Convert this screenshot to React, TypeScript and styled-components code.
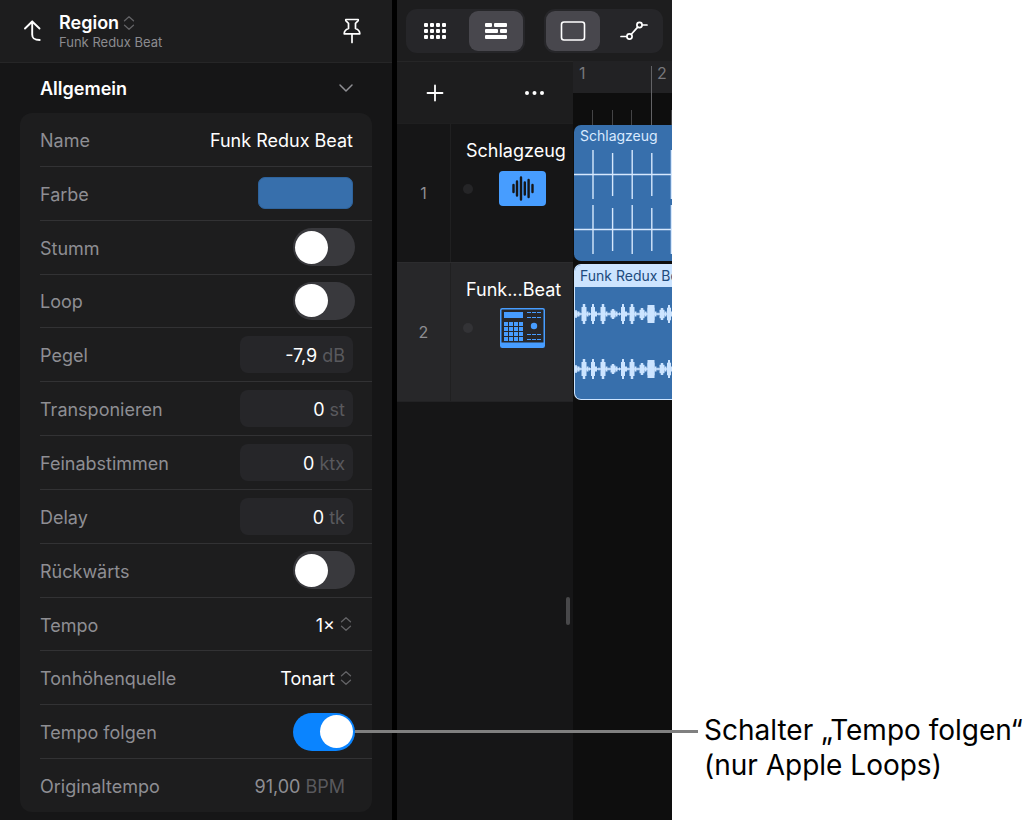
import React from 'react';
import styled, { createGlobalStyle, css } from 'styled-components';

const GlobalStyle = createGlobalStyle`
  * { box-sizing: border-box; }
  html, body { margin: 0; }
  body {
    background: #fff;
    font-family: Inter, "Liberation Sans", sans-serif;
    -webkit-font-smoothing: antialiased;
  }
  button, input, select { font: inherit; color: inherit; margin: 0; }
  h1, h2, p { margin: 0; }
`;

const Page = styled.main`
  position: relative;
  display: grid;
  grid-template-columns: minmax(672px, 1fr) 355px;
  min-height: 100vh;
  padding-bottom: 2px;
`;

const AppWindow = styled.div`
  display: grid;
  grid-template-columns: 392px minmax(275px, 1fr);
  column-gap: 5px;
  background: #000;
  color: #fff;
`;

/* Inspector */

const Inspector = styled.section`
  display: flex;
  flex-direction: column;
  background: #161617;
  padding-bottom: 8px;
`;

const InspectorHeader = styled.header`
  display: flex;
  align-items: center;
  height: 63px;
  padding: 0 28px 0 20px;
  background: #1d1d1e;
  border-bottom: 1px solid #262627;
`;

const PlainButton = styled.button`
  display: inline-flex;
  align-items: center;
  justify-content: center;
  padding: 0;
  border: 0;
  background: none;
  color: #fff;
`;

const HeaderButton = styled(PlainButton)`
  width: 24px;
  height: 32px;
`;

const Heading = styled.div`
  flex: 1;
  padding-left: 15px;
`;

const TitleButton = styled(PlainButton)`
  gap: 4px;
  font-size: 18px;
  font-weight: 600;
  line-height: 22px;
`;

const Subtitle = styled.p`
  color: #8b8b8f;
  font-size: 13px;
  line-height: 16px;
`;

const SectionButton = styled.button`
  display: flex;
  align-items: center;
  justify-content: space-between;
  height: 50px;
  padding: 0 38px 0 40px;
  border: 0;
  background: none;
  font-size: 18px;
  font-weight: 600;
`;

const Card = styled.div`
  flex: 1;
  display: flex;
  flex-direction: column;
  margin: 0 20px;
  padding-left: 20px;
  border-radius: 12px;
  background: #1d1d1e;
`;

const Row = styled.div`
  flex: 1 1 0;
  min-height: 44px;
  display: flex;
  align-items: center;
  justify-content: space-between;
  padding-right: 17px;
  font-size: 18px;
  & + & { border-top: 1px solid #323234; }
`;

const Label = styled.label`
  padding-top: 2px;
  color: #8e8e93;
`;

const NameInput = styled.input`
  width: 180px;
  padding: 2px 0 0;
  border: 0;
  background: none;
  text-align: right;
  margin-right: 2px;
  outline: 0;
`;

const Swatch = styled.button`
  width: 95px;
  height: 32px;
  margin-right: 2px;
  border: 1px solid #2e639c;
  border-radius: 7px;
  background: #376fac;
`;

const Switch = styled.input`
  appearance: none;
  display: flex;
  align-items: center;
  width: 62px;
  height: 38px;
  padding: 0 2px;
  border-radius: 19px;
  background: #39393d;
  &::before {
    content: "";
    width: 33px;
    height: 33px;
    border-radius: 50%;
    background: #fff;
  }
  &:checked { background: #0a84ff; justify-content: flex-end; }
`;

const Field = styled.span`
  display: flex;
  align-items: center;
  gap: 5px;
  width: 113px;
  height: 37px;
  margin-right: 2px;
  padding: 2px 8px 0;
  border-radius: 8px;
  background: #262629;
  color: #59595d;
`;

const FieldInput = styled.input`
  flex: 1;
  min-width: 0;
  padding: 0;
  border: 0;
  background: none;
  color: #fff;
  text-align: right;
  outline: 0;
`;

const Picker = styled.span`
  display: flex;
  align-items: center;
  gap: 5px;
  margin-right: 3px;
`;

const PickerSelect = styled.select`
  appearance: none;
  padding: 2px 0 0;
  border: 0;
  background: none;
  color: #fff;
  text-align: right;
  outline: 0;
`;

const Reading = styled.output`
  display: flex;
  gap: 5px;
  margin-right: 10px;
  padding-top: 2px;
  color: #8e8e93;
`;

const Unit = styled.span`
  color: #59595d;
`;

/* Tracks area */

const Workspace = styled.section`
  display: grid;
  grid-template-rows: 61px 1fr;
  min-width: 0;
  background: #161617;
`;

const Toolbar = styled.div`
  display: flex;
  align-items: center;
  justify-content: space-between;
  padding: 0 9px;
  background: #1d1d1e;
`;

const Segments = styled.div`
  display: flex;
  gap: 7px;
  padding: 2px;
  border-radius: 11px;
  background: #262629;
`;

const Segment = styled.button<{ $on?: boolean }>`
  display: flex;
  align-items: center;
  justify-content: center;
  width: 54px;
  height: 40px;
  padding: 0;
  border: 0;
  border-radius: 9px;
  background: ${(p) => (p.$on ? '#48474d' : 'transparent')};
`;

const Arrange = styled.div`
  display: grid;
  grid-template-columns: 176px minmax(0, 1fr);
`;

const TrackList = styled.div`
  display: flex;
  flex-direction: column;
  border-top: 1px solid #262627;
`;

const TrackTools = styled.div`
  display: flex;
  align-items: center;
  justify-content: space-between;
  height: 61px;
  padding: 0 26px;
  background: #1d1d1e;
`;

const Track = styled.div<{ $selected?: boolean }>`
  display: grid;
  grid-template-columns: 54px 1fr;
  height: 139px;
  background: ${(p) => (p.$selected ? '#272729' : '#161617')};
  border-top: 1px solid ${(p) => (p.$selected ? '#2c2c2e' : '#1f1f20')};
`;

const TrackNumber = styled.div`
  display: flex;
  align-items: center;
  justify-content: center;
  border-right: 1px solid #202021;
  color: #8e8e93;
  font-size: 16px;
`;

const TrackBody = styled.div`
  display: grid;
  grid-template-columns: 38px 1fr;
  grid-template-rows: 24px 41px;
  row-gap: 6px;
  padding: 14px 0 0 10px;
  align-items: center;
`;

const TrackName = styled.h2`
  grid-column: 1 / -1;
  padding-left: 5px;
  font-size: 18px;
  font-weight: 400;
  white-space: nowrap;
`;

const Dot = styled.span<{ $selected?: boolean }>`
  width: 10px;
  height: 10px;
  margin-left: 2px;
  border-radius: 50%;
  background: ${(p) => (p.$selected ? '#333336' : '#252527')};
`;

const Handle = styled.div`
  align-self: flex-end;
  width: 4px;
  height: 28px;
  margin: auto 3px;
  border-radius: 2px;
  background: #48484a;
`;

const HandleArea = styled.div`
  flex: 1;
  display: flex;
  flex-direction: column;
  border-top: 1px solid #222224;
`;

const Timeline = styled.div`
  display: flex;
  flex-direction: column;
  overflow: hidden;
  background: #0e0e0e;
`;

const Ruler = styled.div`
  position: relative;
  height: 64px;
  overflow: hidden;
  background: linear-gradient(#222224 32px, #0e0e0e 32px);
`;

const RulerLabels = styled.div`
  display: grid;
  grid-auto-flow: column;
  grid-auto-columns: 78px;
  padding-left: 6px;
  color: #77777b;
  font-size: 16px;
  line-height: 25px;
`;

const RulerMarks = styled.svg`
  position: absolute;
  inset: 0;
`;

const Clip = styled.article<{ $selected?: boolean }>`
  height: 136px;
  margin: 0 0 3px 1px;
  border-radius: 7px 0 0 7px;
  overflow: hidden;
  background: #376fac;
  ${(p) => p.$selected && css`
    border: 1px solid #cce4ff;
    border-right: 0;
  `}
`;

const ClipTitle = styled.h2<{ $selected?: boolean }>`
  height: 22px;
  padding-left: ${(p) => (p.$selected ? 5 : 6)}px;
  background: ${(p) => (p.$selected ? '#cce4ff' : 'transparent')};
  color: ${(p) => (p.$selected ? '#204a7c' : '#d9eaff')};
  font-size: 14px;
  font-weight: 400;
  line-height: 22px;
  white-space: nowrap;
`;

const Wave = styled.svg`
  display: block;
`;

/* Callout */

const Callout = styled.aside`
  align-self: end;
  padding: 0 0 37px 32px;
  color: #000;
  font-size: 28px;
  line-height: 35px;
  white-space: nowrap;
`;

const Leader = styled.div`
  position: absolute;
  left: 355px;
  right: 329px;
  bottom: 89px;
  height: 3px;
  background: #808080;
`;

const Chevrons = () => (
  <svg width="12" height="16" viewBox="0 0 12 16" fill="none" stroke="#636366" strokeWidth="1.3" strokeLinecap="round" strokeLinejoin="round">
    <path d="M1.5 5.8 6 1.8l4.5 4M1.5 10.2l4.5 4 4.5-4" />
  </svg>
);

const fields = [
  { id: 'pegel', label: 'Pegel', value: '-7,9', unit: 'dB' },
  { id: 'transponieren', label: 'Transponieren', value: '0', unit: 'st' },
  { id: 'feinabstimmen', label: 'Feinabstimmen', value: '0', unit: 'ktx' },
  { id: 'delay', label: 'Delay', value: '0', unit: 'tk' },
];

const SwitchRow = ({ id, label, on }: { id: string; label: string; on?: boolean }) => (
  <Row>
    <Label htmlFor={id}>{label}</Label>
    <Switch id={id} type="checkbox" role="switch" defaultChecked={on} />
  </Row>
);

const PickerRow = ({ id, label, value }: { id: string; label: string; value: string }) => (
  <Row>
    <Label htmlFor={id}>{label}</Label>
    <Picker>
      <PickerSelect id={id}><option>{value}</option></PickerSelect>
      <Chevrons />
    </Picker>
  </Row>
);

const BEATS = Array.from({ length: 60 }, (_, i) => i);

const Beats = () => (
  <Wave width="1200" height="114" stroke="#d6e8fd" strokeWidth="1.4">
    {[27.5, 82.5].map((y) => (
      <g key={y}>
        <path d={`M0 ${y}H1200`} />
        {BEATS.map((i) => {
          const half = i % 2 ? 21.5 : 24.5;
          return <path key={i} d={`M${19 + i * 19.6} ${y - half}v${half * 2}`} />;
        })}
      </g>
    ))}
  </Wave>
);

/* One bar of the loop: centre, half height and width of every hit */
const HITS = [
  [1, 4, 3], [9, 10, 5], [18, 10, 4], [28, 10, 5], [38, 5, 5],
  [48, 10, 4], [57, 10, 5], [67, 6, 5], [76, 9, 7], [87, 6, 5], [94, 9, 4],
];

const Loops = () => (
  <Wave width="1176" height="112" fill="#cce4ff">
    {[27, 82].map((y) => (
      <g key={y}>
        <rect y={y - 0.75} width="1176" height="1.5" />
        {Array.from({ length: 12 }, (_, bar) => HITS.map(([x, h, w]) => {
          const cx = bar * 98 + x;
          const core = w > 6 ? w : w / 2;
          return (
            <g key={`${bar}-${x}`}>
              <rect x={cx - core / 2} y={y - h} width={core} height={h * 2} />
              <rect x={cx - w / 2} y={y - h * 0.7} width={w} height={h * 1.4} />
              <rect x={cx + w / 2} y={y - 2.5} width="2" height="5" />
              <rect x={cx - w / 2 - 2} y={y - 1.5} width="1" height="3" />
            </g>
          );
        }))}
      </g>
    ))}
  </Wave>
);

const AudioIcon = () => (
  <svg width="47" height="35" viewBox="0 0 47 35">
    <rect width="47" height="35" rx="4" fill="#479dff" />
    <path d="M14.5 14v7M18 10.5v14M22 6.500v22M25.8 11.5v12M29.600 9v17M33.500 14v7" stroke="#161617" strokeWidth="2.4" strokeLinecap="round" />
  </svg>
);

const DrumMachineIcon = () => (
  <svg width="47" height="40" viewBox="-1 0 47 40" fill="#479dff">
    <rect x=".75" y=".75" width="43.5" height="38.500" rx="1.500" fill="none" stroke="#479dff" strokeWidth="1.500" />
    <path d="M1 34.500h43V39H1zM4 4h19v6H4z" />
    {[0, 1, 2, 3].map((r) => [0, 1, 2, 3].map((c) => (
      <rect key={`${r}${c}`} x={4 + c * 5} y={14 + r * 5} width="4" height="4" />
    )))}
    <circle cx="34" cy="18" r="3.2" />
    <path d="M27 4.500h14M27 9.500h14M27 26.500h14M27 31.500h14" fill="none" stroke="#479dff" strokeWidth="1.200" strokeDasharray="4 1" />
  </svg>
);

export default function App() {
  return (
    <Page>
      <GlobalStyle />
      <AppWindow>
        <Inspector>
          <InspectorHeader>
            <HeaderButton aria-label="Zurück">
              <svg width="24" height="24" viewBox="0 0 24 24" fill="none" stroke="currentColor" strokeWidth="1.9" strokeLinecap="round" strokeLinejoin="round">
                <path d="M5 9.500 12.200 2.500l7.300 7M12.200 2.500v13c0 4 2 5.500 7.500 5.500" />
              </svg>
            </HeaderButton>
            <Heading>
              <TitleButton>Region <Chevrons /></TitleButton>
              <Subtitle>Funk Redux Beat</Subtitle>
            </Heading>
            <HeaderButton aria-label="Anheften">
              <svg width="20" height="26" viewBox="0 0 20 26" fill="none" stroke="currentColor" strokeWidth="1.7" strokeLinecap="round" strokeLinejoin="round">
                <path d="M3.800 1.500h12.400v1.200l-2.700 2.600v5.200c2.700 1 4.300 2.500 4.300 5.300H2.200c0-2.800 1.600-4.300 4.300-5.300V5.300L3.800 2.700zM10 16v8.500" />
              </svg>
            </HeaderButton>
          </InspectorHeader>
          <SectionButton aria-expanded="true">
            Allgemein
            <svg width="16" height="10" viewBox="0 0 16 10" fill="none" stroke="#8e8e93" strokeWidth="1.5" strokeLinecap="round" strokeLinejoin="round">
              <path d="M2 2l6 6 6-6" />
            </svg>
          </SectionButton>
          <Card>
            <Row>
              <Label htmlFor="name">Name</Label>
              <NameInput id="name" defaultValue="Funk Redux Beat" />
            </Row>
            <Row>
              <Label htmlFor="farbe">Farbe</Label>
              <Swatch id="farbe" />
            </Row>
            <SwitchRow id="stumm" label="Stumm" />
            <SwitchRow id="loop" label="Loop" />
            {fields.map((f) => (
              <Row key={f.id}>
                <Label htmlFor={f.id}>{f.label}</Label>
                <Field><FieldInput id={f.id} defaultValue={f.value} />{f.unit}</Field>
              </Row>
            ))}
            <SwitchRow id="rueckwaerts" label="Rückwärts" />
            <PickerRow id="tempo" label="Tempo" value="1×" />
            <PickerRow id="tonhoehe" label="Tonhöhenquelle" value="Tonart" />
            <SwitchRow id="folgen" label="Tempo folgen" on />
            <Row>
              <Label htmlFor="original">Originaltempo</Label>
              <Reading id="original">91,00 <Unit>BPM</Unit></Reading>
            </Row>
          </Card>
        </Inspector>

        <Workspace>
          <Toolbar>
            <Segments>
              <Segment aria-label="Raster">
                <svg width="24" height="18" fill="#fff">
                  {[1, 7, 13].map((y) => [1, 7, 13, 19].map((x) => (
                    <rect key={`${x}-${y}`} x={x} y={y} width="4" height="4" rx="1" />
                  )))}
                </svg>
              </Segment>
              <Segment $on aria-label="Spuren">
                <svg width="24" height="18" fill="#fff">
                  <rect x="1" y="1" width="7" height="4" rx="1" />
                  <rect x="10" y="1" width="13" height="4" rx="1" />
                  <rect x="1" y="7" width="13" height="4" rx="1" />
                  <rect x="16" y="7" width="7" height="4" rx="1" />
                  <rect x="1" y="13" width="22" height="4" rx="1" />
                </svg>
              </Segment>
            </Segments>
            <Segments>
              <Segment $on aria-label="Regionen">
                <svg width="26" height="20" fill="none" stroke="#fff" strokeWidth="1.6">
                  <rect x="1.5" y="1" width="23" height="18" rx="2.5" />
                </svg>
              </Segment>
              <Segment aria-label="Automation">
                <svg width="28" height="20" viewBox="0 0 28 20" fill="none" stroke="#fff" strokeWidth="1.7" strokeLinecap="round">
                  <circle cx="9.5" cy="15.5" r="2.6" />
                  <circle cx="19.5" cy="4" r="2.6" />
                  <path d="M1 15.500h5.500M11.300 13.300l6.400-7.200M22.500 4H27" />
                </svg>
              </Segment>
            </Segments>
          </Toolbar>
          <Arrange>
            <TrackList>
              <TrackTools>
                <PlainButton aria-label="Spur hinzufügen">
                  <svg width="24" height="24" stroke="#fff" strokeWidth="1.8" strokeLinecap="round">
                    <path d="M4.500 12h15M12 4.500v15" />
                  </svg>
                </PlainButton>
                <PlainButton aria-label="Mehr">
                  <svg width="24" height="24" fill="#fff">
                    <circle cx="4" cy="12" r="2" /><circle cx="11.500" cy="12" r="2" /><circle cx="19" cy="12" r="2" />
                  </svg>
                </PlainButton>
              </TrackTools>
              <Track>
                <TrackNumber>1</TrackNumber>
                <TrackBody>
                  <TrackName>Schlagzeug</TrackName>
                  <Dot />
                  <AudioIcon />
                </TrackBody>
              </Track>
              <Track $selected>
                <TrackNumber>2</TrackNumber>
                <TrackBody>
                  <TrackName>Funk...Beat</TrackName>
                  <Dot $selected />
                  <DrumMachineIcon />
                </TrackBody>
              </Track>
              <HandleArea><Handle /></HandleArea>
            </TrackList>
            <Timeline>
              <Ruler>
                <RulerLabels><span>1</span><span>2</span></RulerLabels>
                <RulerMarks width="1200" height="64">
                  <path d="M19.500 49v15M39.500 49v15M58.500 49v15M98.500 49v15" stroke="#444446" />
                  <path d="M78.500 5v59" stroke="#636366" />
                </RulerMarks>
              </Ruler>
              <Clip>
                <ClipTitle>Schlagzeug</ClipTitle>
                <Beats />
              </Clip>
              <Clip $selected>
                <ClipTitle $selected>Funk Redux Beat</ClipTitle>
                <Loops />
              </Clip>
            </Timeline>
          </Arrange>
        </Workspace>
      </AppWindow>
      <Callout>
        <p>Schalter „Tempo folgen“</p>
        <p>(nur Apple Loops)</p>
      </Callout>
      <Leader />
    </Page>
  );
}
